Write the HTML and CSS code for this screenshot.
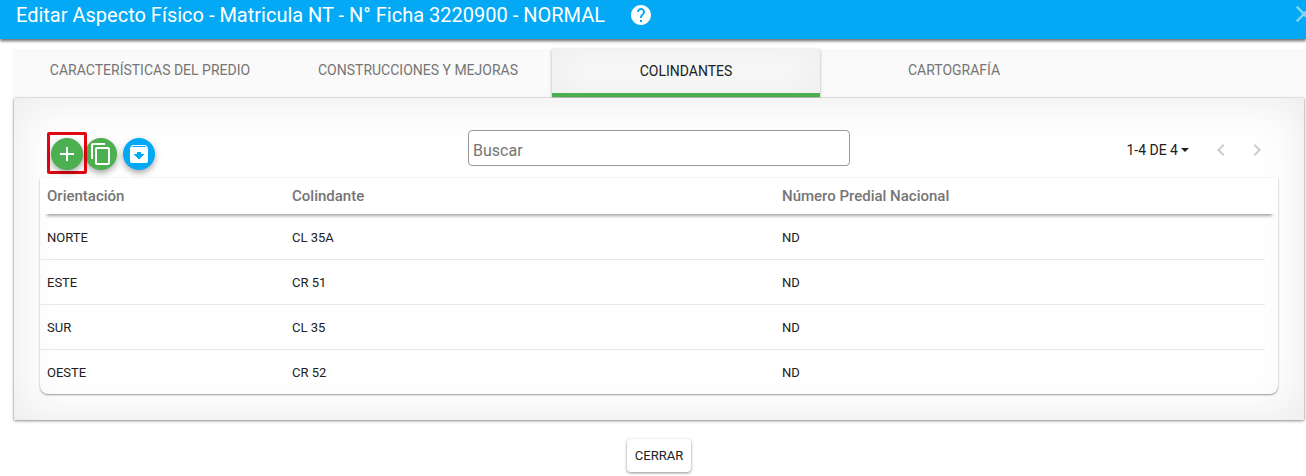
FILE: index.html
```html
<!DOCTYPE html>
<html lang="es">

<head>
  <meta charset="UTF-8">
  <meta name="viewport" content="width=device-width, initial-scale=1.0">
  <title>Editar Aspecto Físico</title>
  <link rel="stylesheet" href="styles.css">
</head>

<body>
  <header class="topbar">
    <h1>Editar Aspecto Físico - Matricula NT - N° Ficha 3220900 - NORMAL</h1>
    <button type="button" class="icon-button help" aria-label="Ayuda">
      <svg viewBox="0 0 24 24" width="24" height="24"><path d="M12 2C6.48 2 2 6.48 2 12s4.480 10 10 10 10-4.480 10-10S17.520 2 12 2zm1 17h-2v-2h2v2zm2.070-7.750l-.9.920C13.450 12.900 13 13.500 13 15h-2v-.5c0-1.100.45-2.100 1.170-2.830l1.240-1.260c.37-.36.59-.86.59-1.410 0-1.100-.9-2-2-2s-2 .9-2 2H8c0-2.210 1.790-4 4-4s4 1.790 4 4c0 .88-.36 1.680-.93 2.250z"/></svg>
    </button>
    <button type="button" class="icon-button close" aria-label="Cerrar ventana">
      <svg viewBox="0 0 24 24" width="28" height="28"><path d="M19 6.410L17.590 5 12 10.590 6.410 5 5 6.410 10.590 12 5 17.590 6.410 19 12 13.410 17.590 19 19 17.590 13.410 12z"/></svg>
    </button>
  </header>

  <main class="content">
    <!-- Pestañas -->
    <nav class="tabs">
      <a href="#predio" class="tab">CARACTERÍSTICAS DEL PREDIO</a>
      <a href="#construcciones" class="tab">CONSTRUCCIONES Y MEJORAS</a>
      <a href="#colindantes" class="tab active">COLINDANTES</a>
      <a href="#cartografia" class="tab">CARTOGRAFÍA</a>
    </nav>

    <section class="panel" id="colindantes">
      <div class="toolbar">
        <div class="actions">
          <span class="highlight">
            <button type="button" class="round green" aria-label="Agregar">
              <svg viewBox="0 0 24 24" width="24" height="24"><path d="M19 13h-6v6h-2v-6H5v-2h6V5h2v6h6v2z"/></svg>
            </button>
          </span>
          <button type="button" class="round green copy" aria-label="Copiar">
            <svg viewBox="0 0 24 24" width="24" height="24"><path d="M16 1H4c-1.100 0-2 .9-2 2v14h2V3h12V1zm3 4H8c-1.100 0-2 .9-2 2v14c0 1.100.9 2 2 2h11c1.100 0 2-.9 2-2V7c0-1.100-.9-2-2-2zm0 16H8V7h11v14z"/></svg>
          </button>
          <button type="button" class="round blue" aria-label="Archivar">
            <svg viewBox="0 0 24 24" width="24" height="24"><path d="M20.540 5.230l-1.390-1.680C18.880 3.210 18.470 3 18 3H6c-.47 0-.88.21-1.160.55L3.460 5.230C3.170 5.570 3 6.020 3 6.500V19c0 1.100.9 2 2 2h14c1.100 0 2-.9 2-2V6.500c0-.48-.17-.93-.46-1.270zM12 17.500L6.500 12H10v-2h4v2h3.500L12 17.500zM5.120 5l.81-1h12l.94 1H5.120z"/></svg>
          </button>
        </div>

        <input type="text" class="search" placeholder="Buscar" aria-label="Buscar">

        <div class="pager">
          <button type="button" class="range">1-4 DE 4<span class="caret"></span></button>
          <button type="button" class="icon-button" aria-label="Anterior" disabled>
            <svg viewBox="0 0 24 24" width="24" height="24"><path d="M15.410 7.410L14 6l-6 6 6 6 1.410-1.410L10.830 12z"/></svg>
          </button>
          <button type="button" class="icon-button" aria-label="Siguiente" disabled>
            <svg viewBox="0 0 24 24" width="24" height="24"><path d="M10 6L8.590 7.410 13.170 12l-4.580 4.590L10 18l6-6z"/></svg>
          </button>
        </div>
      </div>

      <div class="card">
        <table>
          <thead>
            <tr>
              <th>Orientación</th>
              <th>Colindante</th>
              <th>Número Predial Nacional</th>
            </tr>
          </thead>
          <tbody>
            <tr>
              <td>NORTE</td>
              <td>CL 35A</td>
              <td>ND</td>
            </tr>
            <tr>
              <td>ESTE</td>
              <td>CR 51</td>
              <td>ND</td>
            </tr>
            <tr>
              <td>SUR</td>
              <td>CL 35</td>
              <td>ND</td>
            </tr>
            <tr>
              <td>OESTE</td>
              <td>CR 52</td>
              <td>ND</td>
            </tr>
          </tbody>
        </table>
      </div>
    </section>

    <div class="footer">
      <button type="button" class="close-button">CERRAR</button>
    </div>
  </main>
</body>

</html>
```
FILE: styles.css
```css
* {
  box-sizing: border-box;
}

body {
  margin: 0;
  font-family: Roboto, sans-serif;
  font-size: 13px;
  color: #212121;
  background: #fff;
  overflow-x: hidden;
}

button {
  padding: 0;
  border: none;
  background: none;
  font-family: inherit;
  color: inherit;
  cursor: pointer;
}

svg {
  display: block;
  fill: currentColor;
}

/* Barra superior */
.topbar {
  display: flex;
  align-items: center;
  height: 39px;
  padding: 0 0 10px 16px;
  background: #03a9f4;
  color: #fff;
  box-shadow: 0 2px 3px rgba(0, 0, 0, 0.6);
}

.topbar h1 {
  margin: 0;
  font-size: 20px;
  font-weight: 400;
  line-height: 28px;
  white-space: nowrap;
}

.help {
  margin-left: 24px;
}

.close {
  margin: 0 -12px 0 auto;
  padding-bottom: 2px;
  opacity: 0.5;
}

.content {
  padding: 10px 2px 0 14px;
}

/* Pestañas */
.tabs {
  display: flex;
  height: 48px;
  margin: 0 -2px 1px;
  padding-left: 4px;
  background: #fafafa;
}

.tab {
  flex: 0 1 268px;
  line-height: 42px;
  text-align: center;
  font-size: 14px;
  color: #757575;
  text-decoration: none;
  white-space: nowrap;
}

.tab.active {
  line-height: 44px;
  color: #212121;
  background: #fafafa;
  border-bottom: 4px solid #4caf50;
  box-shadow: 0 1px 3px rgba(0, 0, 0, 0.3), inset 0 0 40px rgba(0, 0, 0, 0.06);
}

.panel {
  position: relative;
  padding: 32px 26px 26px;
  background: #fff;
  box-shadow: 0 1px 3px rgba(0, 0, 0, 0.4), 0 0 1px rgba(0, 0, 0, 0.4), inset 0 0 50px rgba(0, 0, 0, 0.09);
}

.toolbar {
  display: grid;
  grid-template-columns: 1fr minmax(100px, 382px) 1fr;
  height: 48px;
}

.actions {
  display: flex;
  align-items: flex-end;
  align-self: start;
  margin-top: 2px;
  padding-left: 7px;
}

.highlight {
  z-index: 1;
  height: 42px;
  padding: 3px 1px;
  border: 3px solid #e30613;
  border-radius: 2px;
}

.round {
  display: flex;
  align-items: center;
  justify-content: center;
  width: 32px;
  height: 32px;
  margin-bottom: 4px;
  border-radius: 50%;
  color: #fff;
  box-shadow: 0 3px 6px rgba(0, 0, 0, 0.35);
}

.green {
  background: #4caf50;
}

.blue {
  background: #03a9f4;
}

.copy {
  margin-left: -2px;
  margin-right: 6px;
}

.search {
  width: 100%;
  height: 36px;
  padding: 4px 4px 0;
  border: 1px solid #999;
  border-radius: 4px;
  background: #fff;
  font-family: inherit;
  font-size: 16px;
}

.search::placeholder {
  color: #757575;
}

.pager {
  display: flex;
  align-items: center;
  justify-content: flex-end;
  gap: 12px;
  height: 40px;
  padding-right: 9px;
}

.pager .icon-button {
  color: #ccc;
}

.range {
  display: flex;
  align-items: center;
  margin-right: 8px;
  font-size: 14px;
}

.caret {
  margin-left: 3px;
  border: 4px solid transparent;
  border-top-color: currentColor;
  border-bottom: none;
}

/* Tabla de colindantes */
.card {
  padding-right: 13px;
  border-radius: 0 0 8px 8px;
  box-shadow: 0 1px 2px rgba(0, 0, 0, 0.4);
}

table {
  width: 100%;
  table-layout: fixed;
  border-collapse: collapse;
}

thead {
  box-shadow: 13px 0 0 #fff, 7px 2px 3px rgba(0, 0, 0, 0.35);
}

th,
td {
  padding: 0 7px;
  text-align: left;
}

th {
  width: 40%;
  height: 36px;
  background: #fff;
  font-size: 15px;
  font-weight: 500;
  color: #757575;
}

th:first-child {
  width: 20%;
}

td {
  height: 45px;
  padding-top: 2px;
  border-bottom: 1px solid #e8e8e8;
}

tr:last-child td {
  border-bottom: none;
}

.footer {
  display: flex;
  justify-content: center;
  padding: 19px 0 4px;
}

.close-button {
  height: 33px;
  padding: 0 8px;
  border-radius: 4px;
  background: #fff;
  font-size: 13px;
  box-shadow: 0 1px 3px rgba(0, 0, 0, 0.45);
}
```
